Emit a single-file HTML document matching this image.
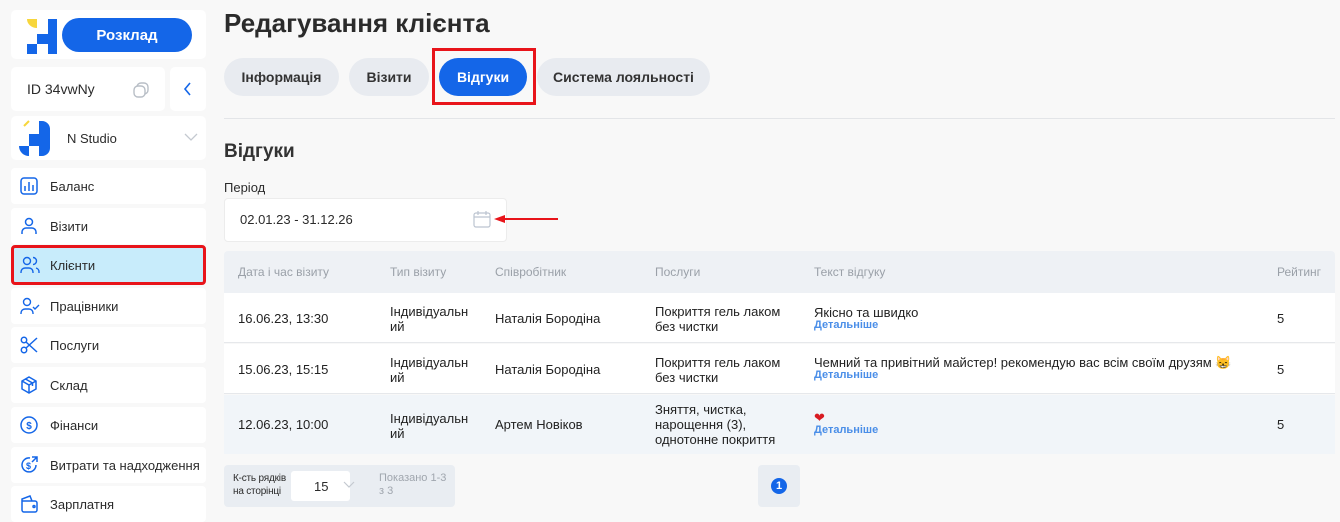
<!DOCTYPE html>
<html><head><meta charset="utf-8"><style>
*{box-sizing:border-box;margin:0;padding:0}
body{width:1340px;height:519px;overflow:hidden;background:#f8f8f8;font-family:"Liberation Sans",sans-serif;color:#2b2b2b;position:relative}
.a{position:absolute}
.card{position:absolute;background:#fff;border-radius:5px}
.mi{position:absolute;left:11px;width:195px;height:36px;background:#fff;border-radius:4px;font-size:13px;display:flex;align-items:center;padding-left:39px}
.mi svg{position:absolute;left:9px;top:9px}
.tab{position:absolute;top:58px;height:38px;border-radius:19px;background:#e8ebf0;font-size:14px;font-weight:bold;display:flex;align-items:center;justify-content:center;color:#333}
.th{position:absolute;top:265px;font-size:12px;color:#9aa0a8}
.td{position:absolute;font-size:13px;line-height:15px;color:#222}
.lnk{color:#4a8ee8;font-size:11px;font-weight:bold;display:block;line-height:11px}
</style></head><body>
<div class="card" style="left:11px;top:10px;width:195px;height:49px"></div>
<svg class="a" style="left:26px;top:17px" width="32" height="37" viewBox="0 0 32 37"><path d="M1 2h10v9a10 9 0 0 1-10-9z" fill="#f7d63c"/><rect x="22" y="2" width="9" height="35" fill="#1466e8"/><rect x="11" y="17" width="11" height="10" fill="#1466e8"/><rect x="1" y="27" width="10" height="10" fill="#1466e8"/></svg>
<div class="a" style="left:62px;top:18px;width:130px;height:34px;border-radius:17px;background:#1466e8;color:#fff;font-weight:bold;font-size:15px;display:flex;align-items:center;justify-content:center">Розклад</div>
<div class="card" style="left:11px;top:67px;width:154px;height:44px"></div>
<div class="a" style="left:27px;top:81px;font-size:14px">ID 34vwNy</div>
<svg class="a" style="left:132px;top:81px" width="18" height="18" viewBox="0 0 18 18" fill="none" stroke="#b8bec6" stroke-width="1.4"><rect x="5" y="2" width="11" height="11" rx="4"/><rect x="2" y="5" width="11" height="11" rx="4" fill="#fff"/></svg>
<div class="card" style="left:170px;top:67px;width:36px;height:44px"></div>
<svg class="a" style="left:183px;top:82px" width="10" height="14" viewBox="0 0 10 14" fill="none" stroke="#1466e8" stroke-width="1.6"><path d="M7 1L2 7l5 6"/></svg>
<div class="card" style="left:11px;top:116px;width:195px;height:44px"></div>
<svg class="a" style="left:16px;top:116px" width="40" height="44" viewBox="0 0 40 44"><path d="M8 10l5-5" stroke="#f7d63c" stroke-width="2"/><path d="M23 5h3a8 8 0 0 1 8 8v19a8 8 0 0 1-8 8h-3z" fill="#1466e8"/><rect x="13" y="18" width="10" height="12" fill="#1466e8"/><path d="M3 30h10v10a10 10 0 0 1-10-10z" fill="#1466e8"/></svg>
<div class="a" style="left:67px;top:131px;font-size:13px">N Studio</div>
<svg class="a" style="left:184px;top:133px" width="14" height="9" viewBox="0 0 14 9" fill="none" stroke="#c4c9d0" stroke-width="1.3"><path d="M1 1l6 6 6-6"/></svg>

<div class="mi" style="top:168px"><svg width="18" height="18" viewBox="0 0 18 18" fill="none" stroke="#1466e8" stroke-width="1.5"><rect x="1" y="1" width="16" height="16" rx="3"/><path d="M5 14V9M9 14V5M13 14V8"/></svg>Баланс</div>
<div class="mi" style="top:208px"><svg width="18" height="18" viewBox="0 0 18 18" fill="none" stroke="#1466e8" stroke-width="1.5"><circle cx="9" cy="5" r="3.5"/><path d="M2 17v-2a4 4 0 0 1 4-4h6a4 4 0 0 1 4 4v2"/></svg>Візити</div>
<div class="mi" style="top:245px;height:40px;background:#c8ecfb;border:3px solid #e8141a;padding-left:36px"><svg style="left:6px;top:8px" width="20" height="18" viewBox="0 0 20 18" fill="none" stroke="#1466e8" stroke-width="1.4"><circle cx="7" cy="5" r="3.5"/><path d="M1 17v-1a4 4 0 0 1 4-4h4a4 4 0 0 1 4 4v1M13 1.5a3.5 3.5 0 0 1 0 7M16 12a4 4 0 0 1 3 4v1"/></svg>Клієнти</div>
<div class="mi" style="top:288px"><svg width="20" height="18" viewBox="0 0 20 18" fill="none" stroke="#1466e8" stroke-width="1.4"><circle cx="7" cy="5" r="3.5"/><path d="M1 17v-1a4 4 0 0 1 4-4h4a4 4 0 0 1 4 4v1M13 10l2 2 4-4"/></svg>Працівники</div>
<div class="mi" style="top:327px"><svg width="18" height="18" viewBox="0 0 18 18" fill="none" stroke="#1466e8" stroke-width="1.5"><circle cx="4" cy="4" r="2.7"/><circle cx="4" cy="14" r="2.7"/><path d="M6 6l11 10M6 12L17 2"/></svg>Послуги</div>
<div class="mi" style="top:367px"><svg width="18" height="18" viewBox="0 0 18 18" fill="none" stroke="#1466e8" stroke-width="1.5"><path d="M9 1l7 4v8l-7 4-7-4V5zM2 5l7 4 7-4M9 9v8M5.5 3l7 4v3"/></svg>Склад</div>
<div class="mi" style="top:407px"><svg width="18" height="18" viewBox="0 0 18 18" fill="none" stroke="#1466e8" stroke-width="1.5"><circle cx="9" cy="9" r="8"/><text x="9" y="13" font-size="10" text-anchor="middle" fill="#1466e8" stroke="none" font-weight="bold" font-family="Liberation Sans">$</text></svg>Фінанси</div>
<div class="mi" style="top:447px"><svg width="18" height="18" viewBox="0 0 18 18" fill="none" stroke="#1466e8" stroke-width="1.5"><path d="M16 9a7 7 0 1 1-6-7"/><path d="M12 1h5v5M17 1l-5 5"/><text x="8.5" y="13" font-size="9" text-anchor="middle" fill="#1466e8" stroke="none" font-weight="bold" font-family="Liberation Sans">$</text></svg>Витрати та надходження</div>
<div class="mi" style="top:486px"><svg width="18" height="18" viewBox="0 0 18 18" fill="none" stroke="#1466e8" stroke-width="1.5"><path d="M2 6h13a2 2 0 0 1 2 2v7a2 2 0 0 1-2 2H4a2 2 0 0 1-2-2V4l8-3 2 5"/><circle cx="14" cy="11.5" r="1"/></svg>Зарплатня</div>

<div class="a" style="left:224px;top:8px;font-size:26px;font-weight:bold;color:#2b2b2b">Редагування клієнта</div>
<div class="tab" style="left:224px;width:115px">Інформація</div>
<div class="tab" style="left:349px;width:80px">Візити</div>
<div class="tab" style="left:439px;width:88px;background:#1466e8;color:#fff">Відгуки</div>
<div class="a" style="left:432px;top:48px;width:104px;height:57px;border:3px solid #e8141a"></div>
<div class="tab" style="left:537px;width:173px">Система лояльності</div>
<div class="a" style="left:224px;top:118px;width:1111px;height:1px;background:#e3e5e8"></div>
<div class="a" style="left:224px;top:141px;font-size:19px;font-weight:bold;color:#333">Відгуки</div>
<div class="a" style="left:224px;top:180px;font-size:13px">Період</div>
<div class="a" style="left:224px;top:198px;width:283px;height:44px;background:#fff;border:1px solid #ececec;border-radius:4px"></div>
<div class="a" style="left:240px;top:212px;font-size:13px">02.01.23 - 31.12.26</div>
<svg class="a" style="left:473px;top:210px" width="18" height="18" viewBox="0 0 18 18" fill="none" stroke="#bcc4d0" stroke-width="1.2"><rect x="1" y="3" width="16" height="14" rx="2"/><path d="M1 7h16M5 1v4M13 1v4"/></svg>
<svg class="a" style="left:494px;top:214px" width="66" height="10" viewBox="0 0 66 10"><path d="M10 5h54" stroke="#e8141a" stroke-width="2"/><path d="M0 5l11-4v8z" fill="#e8141a"/></svg>

<div class="a" style="left:224px;top:251px;width:1111px;height:42px;background:#eef1f5;border-radius:4px 4px 0 0"></div>
<div class="a" style="left:224px;top:293px;width:1111px;height:50px;background:#fff;border-bottom:1px solid #e6e8eb"></div>
<div class="a" style="left:224px;top:344px;width:1111px;height:50px;background:#fff;border-bottom:1px solid #e6e8eb"></div>
<div class="a" style="left:224px;top:395px;width:1111px;height:59px;background:#f1f5f9"></div>
<div class="th" style="left:238px">Дата і час візиту</div>
<div class="th" style="left:390px">Тип візиту</div>
<div class="th" style="left:495px">Співробітник</div>
<div class="th" style="left:655px">Послуги</div>
<div class="th" style="left:814px">Текст відгуку</div>
<div class="th" style="left:1277px">Рейтинг</div>

<div class="td" style="left:238px;top:311px">16.06.23, 13:30</div>
<div class="td" style="left:390px;top:304px">Індивідуальн<br>ий</div>
<div class="td" style="left:495px;top:311px">Наталія Бородіна</div>
<div class="td" style="left:655px;top:304px">Покриття гель лаком<br>без чистки</div>
<div class="td" style="left:814px;top:305px">Якісно та швидко<span class="lnk">Детальніше</span></div>
<div class="td" style="left:1277px;top:311px">5</div>

<div class="td" style="left:238px;top:362px">15.06.23, 15:15</div>
<div class="td" style="left:390px;top:355px">Індивідуальн<br>ий</div>
<div class="td" style="left:495px;top:362px">Наталія Бородіна</div>
<div class="td" style="left:655px;top:355px">Покриття гель лаком<br>без чистки</div>
<div class="td" style="left:814px;top:355px">Чемний та привітний майстер! рекомендую вас всім своїм друзям <span style="color:#e8a020">😸</span><span class="lnk">Детальніше</span></div>
<div class="td" style="left:1277px;top:362px">5</div>

<div class="td" style="left:238px;top:417px">12.06.23, 10:00</div>
<div class="td" style="left:390px;top:411px">Індивідуальн<br>ий</div>
<div class="td" style="left:495px;top:417px">Артем Новіков</div>
<div class="td" style="left:655px;top:402px">Зняття, чистка,<br>нарощення (3),<br>однотонне покриття</div>
<div class="td" style="left:814px;top:410px"><span style="color:#d81b22">❤</span><span class="lnk">Детальніше</span></div>
<div class="td" style="left:1277px;top:417px">5</div>

<div class="a" style="left:224px;top:465px;width:231px;height:42px;background:#e9edf2;border-radius:4px"></div>
<div class="a" style="left:233px;top:472px;font-size:10px;line-height:13px;letter-spacing:-0.2px">К-сть рядків<br>на сторінці</div>
<div class="a" style="left:291px;top:471px;width:59px;height:30px;background:#fff;border-radius:3px"></div>
<div class="a" style="left:314px;top:479px;font-size:13px">15</div>
<svg class="a" style="left:343px;top:481px" width="12" height="8" viewBox="0 0 12 8" fill="none" stroke="#c4c9d0" stroke-width="1.2"><path d="M1 1l5 5 5-5"/></svg>
<div class="a" style="left:379px;top:472px;font-size:11px;line-height:13px;color:#a0a6ae">Показано 1-3<br>з 3</div>
<div class="a" style="left:758px;top:465px;width:42px;height:42px;background:#e9edf2;border-radius:4px"></div>
<div class="a" style="left:771px;top:478px;width:16px;height:16px;border-radius:50%;background:#1466e8;color:#fff;font-size:11px;font-weight:bold;text-align:center;line-height:16px">1</div>
</body></html>
